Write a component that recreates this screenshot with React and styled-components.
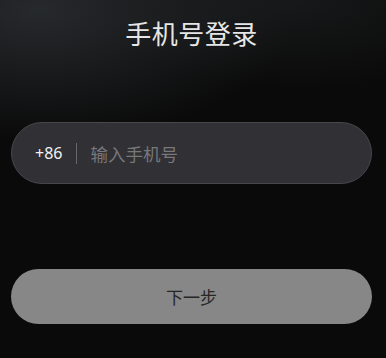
import React from "react";
import styled, { createGlobalStyle } from "styled-components";

const GlobalStyle = createGlobalStyle`
  html, body {
    margin: 0;
    padding: 0;
    background: #0a0a0a;
  }
  body {
    font-family: "Noto Sans", "Noto Sans CJK SC", sans-serif;
  }
`;

const Page = styled.div`
  width: 386px;
  height: 358px;
  box-sizing: border-box;
  padding: 15px 14px 0 11px;
  background:
    radial-gradient(ellipse 260px 130px at 40px 10px, rgba(48, 52, 56, 0.75), rgba(20, 22, 24, 0) 100%),
    radial-gradient(ellipse 200px 90px at 300px 0px, rgba(36, 38, 40, 0.5), rgba(20, 20, 20, 0) 100%),
    #0a0a0a;
  display: flex;
  flex-direction: column;
`;

const Title = styled.h1`
  margin: 0;
  height: 36px;
  line-height: 36px;
  text-align: center;
  font-size: 26px;
  font-weight: 400;
  color: #e6e6e6;
  letter-spacing: 0.5px;
  font-family: "Noto Sans CJK SC", sans-serif;
`;

const PhoneField = styled.div`
  margin-top: 71px;
  height: 62px;
  box-sizing: border-box;
  border-radius: 31px;
  background: #303035;
  border: 1px solid #46464c;
  display: flex;
  align-items: center;
  padding-left: 23px;
`;

const Code = styled.span`
  font-size: 16px;
  color: #f2f2f2;
  font-family: "Noto Sans", sans-serif;
`;

const Divider = styled.span`
  width: 1px;
  height: 21px;
  background: #66666c;
  margin: 0 13px 0 14px;
`;

const Input = styled.input`
  flex: 1;
  border: none;
  outline: none;
  background: transparent;
  font-size: 17.5px;
  color: #eee;
  font-family: "Noto Sans CJK SC", sans-serif;
  padding: 0;
  &::placeholder {
    color: #77777c;
  }
`;

const NextButton = styled.button`
  margin-top: 85px;
  height: 55px;
  border: none;
  border-radius: 28px;
  background: #878787;
  color: #262626;
  font-size: 17px;
  font-family: "Noto Sans CJK SC", sans-serif;
  cursor: pointer;
`;

export default function App() {
  return (
    <>
      <GlobalStyle />
      <Page>
        <Title>手机号登录</Title>
        <PhoneField>
          <Code>+86</Code>
          <Divider />
          <Input placeholder="输入手机号" />
        </PhoneField>
        <NextButton>下一步</NextButton>
      </Page>
    </>
  );
}
